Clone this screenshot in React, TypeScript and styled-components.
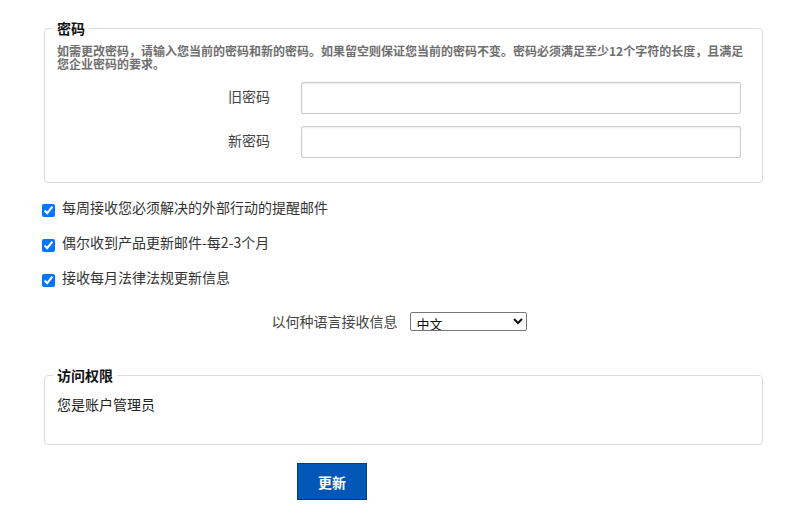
import React from "react";
import styled, { createGlobalStyle } from "styled-components";

const GlobalStyle = createGlobalStyle`
  html, body {
    margin: 0;
    padding: 0;
    background: #ffffff;
  }
  body {
    font-family: "Noto Sans CJK SC", "Noto Sans", sans-serif;
    color: #333333;
    font-size: 14px;
  }
`;

const Page = styled.div`
  width: 719px;
  margin-left: 44px;
  padding-top: 19px;
  padding-bottom: 24px;
  display: flex;
  flex-direction: column;
`;

const FieldSet = styled.fieldset<{ $bottom: number }>`
  margin: 0;
  border: 1px solid #dcdcdc;
  border-radius: 4px;
  padding: 0 12px ${(p) => p.$bottom}px 12px;
  min-width: 0;
`;

const Legend = styled.legend`
  font-size: 14px;
  font-weight: 700;
  line-height: 18px;
  color: #111111;
  padding: 0 4px;
  margin-left: -4px;
`;

const Hint = styled.p`
  margin: 7px 0 0 0;
  font-size: 12px;
  line-height: 13px;
  font-weight: 700;
  color: #6f6f6f;
  padding-right: 1px;
`;

const FormGrid = styled.div`
  display: grid;
  grid-template-columns: 213px 440px;
  column-gap: 31px;
  row-gap: 12px;
  margin-top: 12px;
  align-items: center;
`;

const FieldLabel = styled.label`
  text-align: right;
  font-size: 14px;
  line-height: 20px;
  padding-bottom: 4px;
  color: #444444;
`;

const TextInput = styled.input`
  box-sizing: border-box;
  height: 32px;
  width: 100%;
  border: 1px solid #cccccc;
  border-radius: 2px;
  box-shadow: inset 0 1px 2px rgba(0, 0, 0, 0.08);
  padding: 4px 8px;
  font-size: 14px;
  font-family: inherit;
  background: #ffffff;
`;

const OptionList = styled.div`
  display: flex;
  flex-direction: column;
  gap: 15px;
  margin-top: 15px;
  margin-left: -2px;
`;

const OptionRow = styled.label`
  display: flex;
  align-items: center;
  gap: 7px;
  height: 20px;
  font-size: 14px;
  line-height: 20px;
  color: #333333;
`;

const CheckBox = styled.input`
  width: 13px;
  height: 13px;
  margin: 4px 0 0 0;
  accent-color: #0075ff;
`;

const OptionText = styled.span`
  position: relative;
  top: -1px;
`;

const LanguageRow = styled.div`
  display: flex;
  justify-content: center;
  align-items: center;
  gap: 12px;
  margin-top: 23px;
  padding-right: 9px;
  height: 20px;
  font-size: 14px;
  color: #444444;
`;

const LanguageSelect = styled.select`
  width: 117px;
  height: 19px;
  font-size: 13px;
  font-family: inherit;
  border: 1px solid #767676;
  border-radius: 2px;
  padding: 0 2px;
  background: #ffffff;
  color: #111111;
`;

const AccessSet = styled(FieldSet)`
  margin-top: 35px;
`;

const AccessText = styled.div`
  margin-top: 10px;
  font-size: 14px;
  line-height: 20px;
  color: #222222;
`;

const SubmitButton = styled.button`
  align-self: flex-start;
  margin-top: 18px;
  margin-left: 253px;
  width: 70px;
  height: 37px;
  background: #0057b8;
  border: 1px solid #003c80;
  color: #ffffff;
  font-family: inherit;
  font-size: 14px;
  font-weight: 700;
  cursor: pointer;
`;

const options = [
  "每周接收您必须解决的外部行动的提醒邮件",
  "偶尔收到产品更新邮件-每2-3个月",
  "接收每月法律法规更新信息",
];

export default function App() {
  return (
    <>
      <GlobalStyle />
      <Page>
        <FieldSet $bottom={24}>
          <Legend>密码</Legend>
          <Hint>
            如需更改密码，请输入您当前的密码和新的密码。如果留空则保证您当前的密码不变。密码必须满足至少12个字符的长度，且满足您企业密码的要求。
          </Hint>
          <FormGrid>
            <FieldLabel htmlFor="old-pw">旧密码</FieldLabel>
            <TextInput id="old-pw" type="password" />
            <FieldLabel htmlFor="new-pw">新密码</FieldLabel>
            <TextInput id="new-pw" type="password" />
          </FormGrid>
        </FieldSet>

        <OptionList>
          {options.map((o) => (
            <OptionRow key={o}>
              <CheckBox type="checkbox" defaultChecked />
              <OptionText>{o}</OptionText>
            </OptionRow>
          ))}
        </OptionList>

        <LanguageRow>
          <span>以何种语言接收信息</span>
          <LanguageSelect defaultValue="zh">
            <option value="zh">中文</option>
            <option value="en">English</option>
          </LanguageSelect>
        </LanguageRow>

        <AccessSet $bottom={30}>
          <Legend>访问权限</Legend>
          <AccessText>您是账户管理员</AccessText>
        </AccessSet>

        <SubmitButton type="button">更新</SubmitButton>
      </Page>
    </>
  );
}
